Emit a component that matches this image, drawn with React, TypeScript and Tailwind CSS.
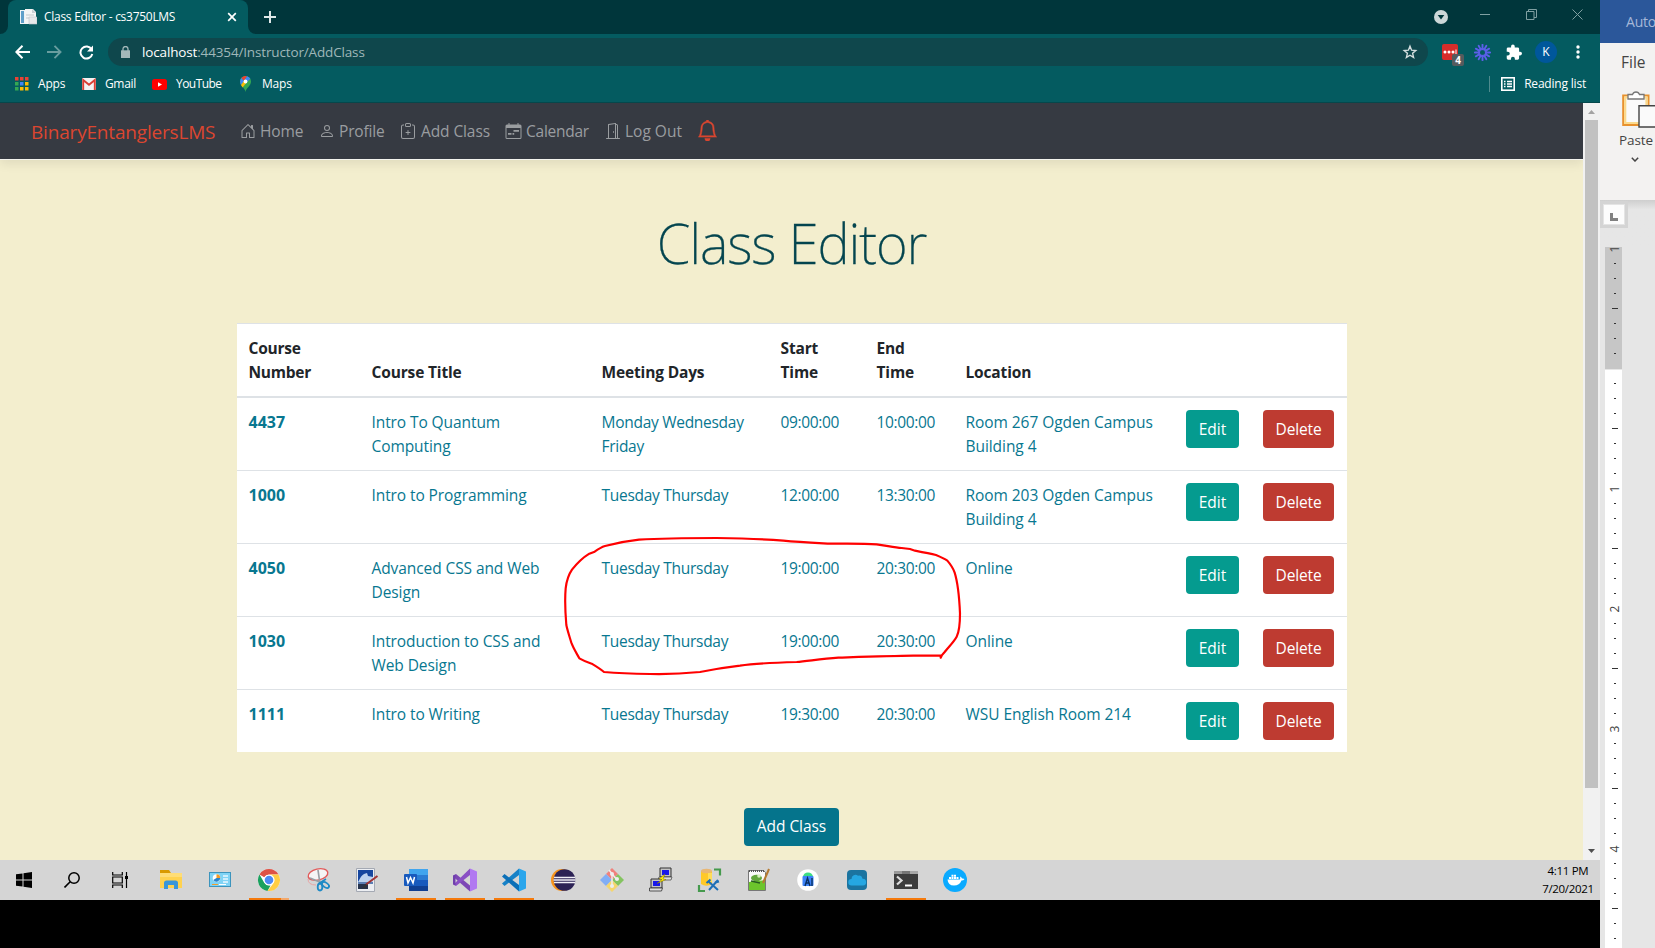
import type { ReactNode } from "react";
import { BsBell, BsClipboardPlus, BsDoorOpen, BsHouseDoor, BsPerson } from "react-icons/bs";

/* ---------- Browser chrome ---------- */

function DocIcon() {
  return (
    <svg width="17" height="16" viewBox="0 0 17 16" className="shrink-0">
      <path d="M0 1h9l2 2v12H0z" fill="#eef3f6" />
      <path d="M1 2h3v12H1z" fill="#5f9fc9" />
      <path d="M5 0h8l3 3v12H5z" fill="#f4f5f5" />
      <path d="M12 0l4 4h-4z" fill="#c9ced2" />
      <path d="M6 6h8M6 9h5" stroke="#c3c9cc" />
      <path d="M9 8h8v7H9z" fill="#e6e8ea" stroke="#bfc5c9" strokeWidth=".6" />
    </svg>
  );
}

function TabStrip() {
  return (
    <div className="flex h-[34px] items-stretch bg-[#00363b]">
      <div className="flex w-2 items-end">
        <svg width="8" height="8"><path d="M8 0v8H0a8 8 0 0 0 8-8z" fill="#045b60" /></svg>
      </div>
      <div className="flex w-[240px] items-center rounded-t-lg bg-[#045b60] pl-3 pr-[11px]">
        <DocIcon />
        <span className="ml-[7px] whitespace-nowrap text-[12px] tracking-[-0.280px] text-white">Class Editor - cs3750LMS</span>
        <svg width="10" height="10" viewBox="0 0 10 10" className="ml-auto shrink-0"><path d="M1.2 1.2l7.6 7.6M8.8 1.2L1.2 8.8" stroke="#fff" strokeWidth="1.7" /></svg>
      </div>
      <div className="flex w-2 items-end">
        <svg width="8" height="8"><path d="M0 0v8h8a8 8 0 0 1-8-8z" fill="#045b60" /></svg>
      </div>
      <div className="flex items-center pl-2">
        <svg width="12" height="12"><path d="M6 0v12M0 6h12" stroke="#dfe8e8" strokeWidth="2" /></svg>
      </div>
      <div className="ml-auto flex items-start">
        <svg width="14" height="14" viewBox="0 0 14 14" className="mt-[10px]">
          <circle cx="7" cy="7" r="7" fill="#ccd7d8" /><path d="M3.7 5h6.6L7 9.6z" fill="#00363b" />
        </svg>
        <svg width="10" height="10" className="ml-8 mt-[10px]"><path d="M0 4.500h10" stroke="#80a0a2" /></svg>
        <svg width="11" height="11" className="ml-9 mt-[9px]"><path d="M.5 2.500h7.500v8H.5zM2.500 2.500v-2h8v8h-2.500" fill="none" stroke="#80a0a2" /></svg>
        <svg width="11" height="11" className="ml-[35px] mr-[17px] mt-[9px]"><path d="M.5.5l10 10M10.500.5l-10 10" stroke="#80a0a2" /></svg>
      </div>
    </div>
  );
}

function Starburst() {
  const spokes = Array.from({ length: 12 }, (_, i) => i * 30);
  return (
    <svg width="17" height="17" viewBox="-8.500 -8.500 17 17">
      {spokes.map((a) => (
        <path key={a} d="M0-3.300V-7.700" stroke="#5b5fe8" strokeWidth="1.900" strokeLinecap="round" transform={`rotate(${a})`} />
      ))}
      <circle r="3.700" fill="none" stroke="#5b5fe8" strokeWidth="1.600" />
    </svg>
  );
}

function AddressBar() {
  return (
    <div className="flex h-9 items-center">
      <svg width="15" height="14" viewBox="0 0 15 14" className="ml-[15px]"><path d="M7.500.8L1.400 7l6.100 6.200M1.500 7H15" fill="none" stroke="#fff" strokeWidth="2" /></svg>
      <svg width="15" height="14" viewBox="0 0 15 14" className="ml-[17px]"><path d="M7.500.8L13.600 7l-6.100 6.200M13.500 7H0" fill="none" stroke="#699d9f" strokeWidth="1.800" /></svg>
      <svg width="15" height="15" viewBox="0 0 15 15" className="ml-[17px]"><path d="M12.600 4.400A6 6 0 1 0 13.300 9" fill="none" stroke="#fff" strokeWidth="2" /><path d="M14 .5v6H8z" fill="#fff" /></svg>
      <div className="ml-[14px] flex h-7 w-[1320px] items-center rounded-full bg-[#0f474c] pl-[13px] pr-[10px]">
        <svg width="9" height="12" viewBox="0 0 9 12"><path d="M0 4.300h9V12H0z" fill="#a4b8ba" /><path d="M2 5V3a2.500 2.500 0 0 1 5 0v2" fill="none" stroke="#a4b8ba" strokeWidth="1.300" /></svg>
        <span className="ml-[12px] whitespace-nowrap text-[13.500px] tracking-[-0.150px] text-[#9fb7b9]">
          <span className="text-white">localhost</span>:44354/Instructor/AddClass
        </span>
        <svg width="16" height="16" viewBox="0 0 16 16" className="ml-auto"><path d="M8 2.200l1.600 4 4.200.3-3.200 2.800 1 4.100L8 11.200l-3.600 2.200 1-4.100L2.200 6.500l4.200-.3z" fill="none" stroke="#d5dfdf" strokeWidth="1.400" /></svg>
      </div>
      <div className="relative ml-[14px] h-4 w-4 rounded-[2px] bg-[#d62d2a]">
        <svg width="16" height="16"><g fill="#fff"><circle cx="3" cy="8" r="1.500" /><circle cx="7" cy="8" r="1.500" /><circle cx="11" cy="8" r="1.500" /><path d="M13.500 5.500h1v5h-1z" /></g></svg>
        <span className="absolute left-[10px] top-[10px] flex h-3 w-3 items-center justify-center rounded-[2px] bg-[#555b5e] text-[10px] font-bold leading-none text-white">4</span>
      </div>
      <div className="ml-4"><Starburst /></div>
      <svg width="16" height="17" viewBox="1 1 22 22" className="ml-[15px]"><path d="M20.500 11H19V7a2 2 0 0 0-2-2h-4V3.500a2.500 2.500 0 0 0-5 0V5H4a2 2 0 0 0-2 2v3.800h1.500a2.700 2.700 0 0 1 0 5.400H2V20a2 2 0 0 0 2 2h3.800v-1.500a2.700 2.700 0 0 1 5.400 0V22H17a2 2 0 0 0 2-2v-4h1.500a2.500 2.500 0 0 0 0-5z" fill="#fff" /></svg>
      <span className="ml-[13px] flex h-[22px] w-[22px] items-center justify-center rounded-full bg-[#00579b] text-[12px] text-white">K</span>
      <svg width="4" height="14" viewBox="0 0 4 14" className="ml-[19px]" fill="#fff"><circle cx="2" cy="2" r="1.700" /><circle cx="2" cy="7" r="1.700" /><circle cx="2" cy="12" r="1.700" /></svg>
    </div>
  );
}

function BookmarksBar() {
  const dots = ["#ea4335", "#ea4335", "#ea4335", "#34a853", "#4285f4", "#fbbc05", "#34a853", "#fbbc05", "#fbbc05"];
  return (
    <div className="flex h-[28px] items-center whitespace-nowrap text-[12px] tracking-[-0.200px] text-white">
      <svg width="14" height="14" className="ml-[15px]">
        {dots.map((c, i) => <rect key={i} x={(i % 3) * 5} y={Math.floor(i / 3) * 5} width="3.500" height="3.500" fill={c} />)}
      </svg>
      <span className="ml-[9px] w-[27px]">Apps</span>
      <svg width="14" height="12" viewBox="0 0 14 12" className="ml-[17px]"><rect width="14" height="12" rx="1" fill="#f3f3f3" /><path d="M1.200 12V2L7 6.800 12.800 2v10" fill="none" stroke="#d93f35" strokeWidth="1.900" /></svg>
      <span className="ml-[9px] w-[32px] tracking-[-0.350px]">Gmail</span>
      <svg width="15" height="11" className="ml-[15px]"><rect width="15" height="11" rx="2.500" fill="#f00" /><path d="M6 3.200l4 2.300-4 2.300z" fill="#fff" /></svg>
      <span className="ml-[9px] w-[48px] tracking-[-0.550px]">YouTube</span>
      <svg width="11" height="16" viewBox="0 0 11 16" className="ml-[16px]">
        <path d="M5.500 16C5 12 0 10 0 5.500a5.500 5.500 0 0 1 11 0C11 10 6 12 5.500 16z" fill="#34a853" />
        <path d="M1.300 2A5.500 5.500 0 0 1 7 .2L4 5z" fill="#ea4335" /><path d="M7 .2a5.500 5.500 0 0 1 3.300 2.600L7 6 4 5z" fill="#4285f4" />
        <path d="M1.300 2L4 5l-3 4C-.3 6.500-.2 4 1.300 2z" fill="#4285f4" /><path d="M1 9l3-4 3 1-4.500 5.500z" fill="#fbbc05" /><circle cx="5.500" cy="5.500" r="1.900" fill="#fff" />
      </svg>
      <span className="ml-[11px]">Maps</span>
      <span className="ml-auto h-4 w-px bg-[#4f8b8e]" />
      <svg width="14" height="14" viewBox="0 0 14 14" className="ml-[11px]"><rect x=".8" y=".8" width="12.400" height="12.400" fill="none" stroke="#fff" strokeWidth="1.600" /><path d="M3 4.500h1.500M6 4.500h5M3 7h1.500M6 7h5M3 9.500h1.500M6 9.500h5" stroke="#fff" strokeWidth="1.300" /></svg>
      <span className="ml-[9px] mr-[14px]">Reading list</span>
    </div>
  );
}

/* ---------- Page ---------- */

function CalendarIcon() {
  return (
    <svg width="17" height="16" viewBox="0 0 17 16" fill="currentColor">
      <path d="M3.500 0h1v1.500h8V0h1v1.500H15A1.500 1.500 0 0 1 16.500 3v11.500A1.500 1.500 0 0 1 15 16H2a1.500 1.500 0 0 1-1.500-1.500V3A1.500 1.500 0 0 1 2 1.500h1.500zM1.500 5v9.500a.5.5 0 0 0 .5.5h13a.5.5 0 0 0 .5-.5V5z" fillRule="evenodd" />
      <path d="M8.500 7H14v1.700H8.500zM3 10h3.500v1.700H3zM7.500 10h1.700v1.700H7.500z" />
    </svg>
  );
}

function NavLink({ icon, label, className }: { icon: ReactNode; label: string; className: string }) {
  return (
    <a className={`flex items-center whitespace-nowrap text-[15.500px] text-[#9a9da0] ${className}`}>
      {icon}
      <span className="pt-[2px]">{label}</span>
    </a>
  );
}

function Navbar() {
  return (
    <nav className="relative z-10 flex h-14 items-center bg-[#363a42] shadow-[0_1px_0_#f4f4ee,0_5px_10px_rgba(0,0,0,0.08)]">
      <a className="ml-[31px] w-[185px] whitespace-nowrap pt-[2px] text-[19px] tracking-[-0.180px] text-[#dc4630]">BinaryEntanglersLMS</a>
      <NavLink className="ml-6 w-[79px] gap-1 tracking-[-0.100px]" icon={<BsHouseDoor size={16} />} label="Home" />
      <NavLink className="w-[81px] gap-1 tracking-[-0.150px]" icon={<BsPerson size={16} />} label="Profile" />
      <NavLink className="w-[105px] gap-[5px] tracking-[-0.100px]" icon={<BsClipboardPlus size={16} />} label="Add Class" />
      <NavLink className="w-[100px] gap-1 tracking-[-0.250px]" icon={<CalendarIcon />} label="Calendar" />
      <NavLink className="w-[92px] gap-1" icon={<BsDoorOpen size={16} />} label="Log Out" />
      <BsBell className="-mt-px text-[#dc4630]" size={21} stroke="currentColor" strokeWidth={0.4} />
    </nav>
  );
}

const columns = "grid grid-cols-[123px_230px_179px_96px_89px_220px_77px_96px]";

const courses = [
  ["4437", "Intro To Quantum\nComputing", "Monday Wednesday\nFriday", "09:00:00", "10:00:00", "Room 267 Ogden Campus\nBuilding 4"],
  ["1000", "Intro to Programming", "Tuesday Thursday", "12:00:00", "13:30:00", "Room 203 Ogden Campus\nBuilding 4"],
  ["4050", "Advanced CSS and Web\nDesign", "Tuesday Thursday", "19:00:00", "20:30:00", "Online"],
  ["1030", "Introduction to CSS and\nWeb Design", "Tuesday Thursday", "19:00:00", "20:30:00", "Online"],
  ["1111", "Intro to Writing", "Tuesday Thursday", "19:30:00", "20:30:00", "WSU English Room 214"],
];

function CourseTable() {
  return (
    <div className="mx-auto mt-[43px] w-[1110px] whitespace-pre border-t border-[#dee2e6] bg-white text-[15.500px] leading-6">
      <div className={`${columns} h-[74px] items-end border-b-2 border-[#dee2e6] pb-3 font-bold tracking-[-0.150px] text-[#212529]`}>
        <span className="pl-3 tracking-[-0.250px]">{"Course\nNumber"}</span>
        <span className="pl-3">Course Title</span>
        <span className="pl-3">Meeting Days</span>
        <span className="pl-3">{"Start\nTime"}</span>
        <span className="pl-3">{"End\nTime"}</span>
        <span className="pl-3">Location</span>
      </div>
      {courses.map(([id, title, days, start, end, place], i) => (
        <div key={id} className={`${columns} py-3 text-[#087790] ${i > 0 ? "border-t border-[#dee2e6]" : ""} ${i < 4 ? "min-h-[72px]" : ""}`}>
          <span className="pl-3 text-[16px] font-bold">{id}</span>
          <span className="pl-3 tracking-[-0.090px]">{title}</span>
          <span className="pl-3 tracking-[-0.280px]">{days}</span>
          <span className="pl-3 tracking-[-0.340px]">{start}</span>
          <span className="pl-3 tracking-[-0.340px]">{end}</span>
          <span className="pl-3 tracking-[-0.060px]">{place}</span>
          <span className="pl-3"><button className="h-[38px] w-[53px] rounded-[4px] bg-[#059b8f] pl-px text-white">Edit</button></span>
          <span className="pl-3"><button className="h-[38px] w-[71px] rounded-[4px] bg-[#be3b31] pl-px tracking-[-0.150px] text-white">Delete</button></span>
        </div>
      ))}
    </div>
  );
}

function HandDrawnCircle() {
  return (
    <svg width="440" height="180" viewBox="0 0 1320 540" className="pointer-events-none absolute left-[540px] top-[510px] z-20">
      <path
        d="M1202 443L1205 437L1120 437C1050 438 960 441 895 443C840 447 800 454 770 456C700 458 640 461 600 467C550 473 520 478 480 486C420 492 370 493 330 492C280 491 230 489 192 486C180 476 170 470 155 461C140 456 130 452 118 445C110 430 100 415 94 398C88 378 82 360 79 345C76 310 74 270 77 235C80 210 87 192 96 179C115 155 130 142 148 131L164 125C175 117 185 111 195 108C225 100 260 93 297 89C360 85 450 84 530 84C600 85 680 88 730 92C770 96 810 98 850 100C900 102 960 100 1010 103C1040 107 1065 113 1085 114L1110 117L1125 122C1150 127 1170 131 1188 135C1200 140 1212 145 1222 152C1234 166 1240 176 1244 188C1254 220 1258 265 1260 310C1260 340 1258 365 1250 380C1240 398 1226 410 1214 426L1202 440"
        fill="none" stroke="#f00" strokeWidth="6.500" strokeLinejoin="round" strokeLinecap="round"
      />
    </svg>
  );
}

function Scrollbar() {
  return (
    <div className="flex w-[17px] flex-col items-center bg-[#f1f1f1]">
      <svg width="17" height="17"><path d="M5 11h7L8.500 7z" fill="#a3a3a3" /></svg>
      <div className="h-[668px] w-[13px] bg-[#c1c1c1]" />
      <svg width="17" height="17" className="mt-auto"><path d="M5 6h7L8.500 10z" fill="#505050" /></svg>
    </div>
  );
}

/* ---------- Taskbar ---------- */

const taskIcons: { art: ReactNode; bar?: "full" | "split" }[] = [
  { art: <><path d="M5 5h9l2 3H5z" fill="#d99a00" /><path d="M5 8h22v15H5z" fill="#ffd24f" /><path d="M5 8h22v4H5z" fill="#ffdd76" /><path d="M9 24v-6q0-2.500 2.500-2.500h9q2.500 0 2.500 2.500v6h-4v-4h-6v4z" fill="#3a96d9" /></> },
  { art: <><rect x="5.500" y="7.500" width="21" height="14" fill="#7fd3f5" stroke="#3c94bd" /><circle cx="12.500" cy="13" r="3.800" fill="#fff" /><path d="M12.500 13V9.200a3.800 3.800 0 0 1 3.800 3.800z" fill="#f49b27" /><path d="M12.500 13h3.800a3.800 3.800 0 0 1-7 2z" fill="#2b83c9" /><path d="M19 11h5M19 14h5M19 17h5" stroke="#e9f8ff" strokeWidth="1.700" /><path d="M8 19.500h6" stroke="#f49b27" /><path d="M15 19.500h7" stroke="#fff" /></> },
  { bar: "split", art: <><circle cx="16" cy="15" r="11" fill="#fff" /><path d="M16 4a11 11 0 0 1 9.530 5.500H16a5.500 5.500 0 0 0-4.760 2.750L6.470 9.500A11 11 0 0 1 16 4z" fill="#de5246" /><path d="M6.470 9.500l4.770 8.250A5.500 5.500 0 0 0 16 20.500l1.500 0L14.500 26A11 11 0 0 1 6.470 9.500z" fill="#1aa15f" /><path d="M25.530 9.500A11 11 0 0 1 14.500 25.900l6.260-8.150A5.500 5.500 0 0 0 16 9.500z" fill="#ffce44" /><circle cx="16" cy="15" r="5.300" fill="#fff" /><circle cx="16" cy="15" r="4.300" fill="#4c8bf5" /></> },
  { art: <><ellipse cx="16" cy="9.500" rx="10" ry="5.500" fill="#f5f5f5" stroke="#e25b5b" strokeWidth="1.400" transform="rotate(-13 16 9.500)" /><path d="M6 14q0 6 8 6" fill="none" stroke="#e8a5a5" /><path d="M16 5l2 14M8 13l12 5" stroke="#9aa0a5" strokeWidth="1.700" /><ellipse cx="18" cy="22" rx="2.300" ry="3.500" fill="none" stroke="#1e8ac6" strokeWidth="1.800" /><ellipse cx="23.500" cy="20" rx="2.300" ry="4" fill="none" stroke="#1e8ac6" strokeWidth="1.800" transform="rotate(-55 23.500 20)" /><path d="M17 18.500l7-4.500" stroke="#1e8ac6" strokeWidth="1.500" /></> },
  { art: <><path d="M5.500 3.500h18v23h-18z" fill="#eceef2" stroke="#a4a9b3" /><path d="M7 5h15v12H7z" fill="#16469f" /><path d="M7 17c2-3 2-5 6-8l3-1 1 3 5 1v5z" fill="#bcd2ef" /><path d="M7 17h15v2H7z" fill="#5b7fb5" /><path d="M7 19h10v5H7z" fill="#26334d" /><path d="M26.500 11L15 19.500" stroke="#a23434" strokeWidth="2" /><path d="M15.500 18.500l-5 5 5-1.500z" fill="#333" /></> },
  { bar: "full", art: <><path d="M9 4h19v6H9z" fill="#41a5ee" /><path d="M9 10h19v5H9z" fill="#2b7cd3" /><path d="M9 15h19v6H9z" fill="#185abd" /><path d="M9 21h19v5H9z" fill="#103f91" /><rect x="4" y="9" width="13" height="12" rx="1" fill="#185abd" /><path d="M6.500 12l1.500 6 2.500-5.500L13 18l1.500-6" fill="none" stroke="#fff" strokeWidth="1.500" /></> },
  { bar: "full", art: <><path d="M21 3.500l7 3v17l-7 3z" fill="#b179f1" /><path d="M4.500 10.500L7 9l14 11.500v6L4.500 12z" fill="#7d47b5" /><path d="M21 3.500V10L7 21l-2.500-1.500z" fill="#8a4fc4" /><path d="M4 10.500l2.500-1v11l-2.500-1z" fill="#7040ad" /></> },
  { bar: "full", art: <><path d="M21 3.500l-17 15 2.500 2.500L21 10z" fill="#1681c7" /><path d="M21 26.500l-17-15L6.500 9 21 20z" fill="#0b70b8" /><path d="M21 3.500l7 3v17l-7 3z" fill="#2ba6ec" /></> },
  { art: <><circle cx="15" cy="15" r="11" fill="#f7941e" /><circle cx="17.500" cy="15" r="10.800" fill="#2c2255" /><path d="M7 12.500h21M6.500 15h22M7 17.500h21" stroke="#f0eff6" strokeWidth="1.400" /></> },
  { art: <><path d="M16 3l6 6-6 6-6-6z" fill="#f0817c" /><path d="M10 9l6 6-6 6-6-6z" fill="#82aef5" /><path d="M22 9l6 6-6 6-6-6z" fill="#84c460" /><path d="M16 15l6 6-6 6-6-6z" fill="#f5d66d" /><path d="M13 5l8 10M16 9v13" stroke="#eee" strokeWidth="1.500" /><g fill="#eee"><circle cx="16" cy="9" r="2" /><circle cx="16" cy="21" r="2" /><circle cx="21" cy="14" r="2" /></g></> },
  { art: <><path d="M15 3h11v9H15z" fill="#c4c4c4" stroke="#333" /><path d="M17 5h7v5h-7z" fill="#1717ea" /><path d="M14 12h13l-1 3H13z" fill="#ddd" stroke="#444" strokeWidth=".7" /><path d="M6 14h11v9H6z" fill="#c4c4c4" stroke="#333" /><path d="M8 16h7v5H8z" fill="#1717ea" /><path d="M4.500 23h13l-1 3h-12z" fill="#ddd" stroke="#333" strokeWidth=".8" /><path d="M20 9l-6 5 3 .5-5 4 9-4-3-.5z" fill="#ffef00" stroke="#806f00" strokeWidth=".5" /></> },
  { art: <><path d="M7 6v13q5 3.500 11 0V6z" fill="#ffc928" /><ellipse cx="12.500" cy="6" rx="5.500" ry="2.300" fill="#e9b774" /><path d="M14 8h4v9h-4z" fill="#ffdd58" /><path d="M20 4.500h6v6M5 20v6h6" fill="none" stroke="#459a4d" strokeWidth="2.200" /><path d="M14 16l10 9M24 15l-9 10" stroke="#1d70b7" strokeWidth="2" /><path d="M21 17.500l4-1M12.500 18l4-3.500" stroke="#1d70b7" strokeWidth="2" /></> },
  { art: <><path d="M5.500 5.500h15l2 2v18h-17z" fill="#fafafa" stroke="#777" /><path d="M6 6h15" stroke="#555" strokeWidth="2" strokeDasharray="1 1" /><path d="M6 17l16-2v10H6z" fill="#6cc52c" /><ellipse cx="13.500" cy="13" rx="5.500" ry="3.200" fill="#62a73c" /><circle cx="16" cy="11" r="1.800" fill="#d6f0bd" /><path d="M8 16l9 2" stroke="#285f1f" strokeWidth="1.500" /><path d="M26 4l-6 14" stroke="#b67a31" strokeWidth="2" /></> },
  { art: <><circle cx="16" cy="15" r="10.800" fill="#fff" /><path d="M11 12a5 4.500 0 0 1 10 0z" fill="#3ddc84" /><rect x="10.500" y="11" width="11" height="10" rx="1" fill="#3c82f7" /><path d="M13 21l2.500-8 2.500 8M14 18h3.500M20 13v8" fill="none" stroke="#082f62" strokeWidth="1.400" /></> },
  { art: <><rect x="6" y="5" width="20" height="20" rx="4" fill="#1b74a0" /><path d="M10.500 20.500a3.200 3.200 0 0 1 0-6.400 4 4 0 0 1 6.500-3.300q3.500-1 4.500 3a3.200 3.200 0 0 1 .5 6.700z" fill="#25a7e2" /></> },
  { bar: "full", art: <><path d="M4 6h24v18H4z" fill="#3d3d3d" /><path d="M4 6h8v3H4z" fill="#999" /><path d="M12 6h8v3h-8z" fill="#777" /><path d="M20 6h8v3h-8z" fill="#a8a8a8" /><path d="M7 11.500l4.500 4-4.500 4" fill="none" stroke="#ddd" strokeWidth="2.200" /><path d="M15 20.500h7" stroke="#fff" strokeWidth="2" /></> },
  { art: <><circle cx="16" cy="15" r="12" fill="#0aaaff" /><path d="M8.500 14.500H21q.5-1.500 0-3 1.500.5 2 2 1.500-.3 2.500.4-1 1.600-3 1.600Q20.500 20.500 15 20.500q-6 0-6.500-6zM10 12h2v2h-2zM12.500 12h2v2h-2zM15 12h2v2h-2zM17.500 12h2v2h-2zM12.500 9.700h2v2h-2zM15 9.700h2v2h-2z" fill="#fff" /></> },
];

function Taskbar() {
  return (
    <div className="flex h-10 bg-[#d5d5d5]">
      <div className="flex w-12 items-center justify-center"><svg width="16" height="16"><path d="M0 2.300L6.500 1.400v6.100H0zM7.500 1.200L16 0v7.500H7.500zM0 8.500h6.500v6.100L0 13.700zM7.500 8.500H16V16l-8.500-1.200z" fill="#000" /></svg></div>
      <div className="flex w-12 items-center justify-center"><svg width="16" height="16"><circle cx="10" cy="6" r="5.200" fill="none" stroke="#000" strokeWidth="1.500" /><path d="M6.200 9.800L.5 15.500" stroke="#000" strokeWidth="1.600" /></svg></div>
      <div className="flex w-[50px] items-center pl-4"><svg width="16" height="16"><path d="M.7 0v3h9.600V0M.7 16v-3h9.600v3M.7 5h9.600v6H.7z" fill="none" stroke="#000" strokeWidth="1.200" /><path d="M14.500 0v16" stroke="#000" strokeWidth="1.200" /><path d="M13 4h3v3h-3z" /></svg></div>
      {taskIcons.map((t, i) => (
        <div key={i} className="flex w-[49px] flex-col items-start justify-between pl-[5px] pt-[5px]">
          <svg width="32" height="30" className="ml-1">{t.art}</svg>
          <div className="flex h-[2px] w-10">
            {t.bar === "full" && <div className="w-10 bg-[#f57a0c]" />}
            {t.bar === "split" && <><div className="w-8 bg-[#f57a0c]" /><div className="w-2 bg-[#f3a86b]" /></>}
          </div>
        </div>
      ))}
      <div className="ml-auto w-[64px] pt-[2px] text-center text-[11.500px] leading-[18px] tracking-[-0.320px] text-black">
        <div>4:11 PM</div>
        <div>7/20/2021</div>
      </div>
    </div>
  );
}

/* ---------- Word window ---------- */

function RulerMark({ step }: { step: number }) {
  if (step === 8) return null;
  if (step % 8 === 0) {
    const n = step === 0 ? 1 : (step - 8) / 8;
    return <span className="-rotate-90 text-[12px] leading-none text-[#444]">{n}</span>;
  }
  return step % 4 === 0 ? <span className="h-px w-[6px] bg-[#333]" /> : <span className="h-px w-[2px] bg-[#333]" />;
}

function WordWindow() {
  const steps = Array.from({ length: 47 }, (_, i) => i);
  return (
    <aside className="flex w-[55px] flex-col overflow-hidden bg-[#e6e6e6]">
      <div className="flex h-[43px] items-center bg-[#2b579a] pl-[26px] text-[14px] tracking-[-0.200px] text-[#a5b8d8]">Auto</div>
      <div className="flex h-[157px] shrink-0 flex-col bg-[#f3f2f1] text-[#444]">
        <div className="mt-[7px] pl-[21px] text-[15.500px] leading-6">File</div>
        <svg width="33" height="40" viewBox="0 0 33 40" className="ml-[22px] mt-[15px]">
          <path d="M1.200 6.500h25.300V36H1.200z" fill="#fafafa" stroke="#e8912d" strokeWidth="2" />
          <path d="M3.200 8.500h21.300V34H3.200z" fill="none" stroke="#fbd98b" strokeWidth="2.200" />
          <path d="M6 10V5.500h4.500a3.700 3.700 0 0 1 7 0H22V10z" fill="#fff" stroke="#777" strokeWidth="1.300" />
          <path d="M17 16.700h18V38H17z" fill="#fafafa" stroke="#444" strokeWidth="1.400" />
        </svg>
        <div className="mt-px pl-[19px] text-[13.500px] leading-5 tracking-[-0.100px]">Paste</div>
        <svg width="8" height="5" className="ml-[31px] mt-[7px]"><path d="M.8.800L4 4 7.200.8" fill="none" stroke="#444" strokeWidth="1.500" /></svg>
      </div>
      <div className="h-[47px] shrink-0 bg-linear-to-b from-[#cecece] via-[#e6e6e6] via-20% to-[#e6e6e6] pt-px">
        <div className="flex h-[27px] w-7 items-center bg-[#d4d4d4] pl-[3px]">
          <div className="flex h-[21px] w-[22px] items-center justify-center border border-[#e4e4e4] bg-[#fcfcfc]"><svg width="8" height="8" className="mt-[4px]"><path d="M1.500 0v6.500H8" fill="none" stroke="#808080" strokeWidth="3" /></svg></div>
        </div>
      </div>
      <div className="ml-[5px] flex w-[17px] flex-1 flex-col bg-[linear-gradient(#c6c6c6_0,#c6c6c6_122px,#e6e6e6_122px,#e6e6e6_123px,#fff_123px)]">
        <div className="-mt-[6px] flex flex-col">
          {steps.map((s) => (
            <div key={s} className="flex h-[15px] items-center justify-center pl-[3px]"><RulerMark step={s} /></div>
          ))}
        </div>
      </div>
    </aside>
  );
}

export default function App() {
  return (
    <div className="flex h-[948px] w-[1655px] overflow-hidden bg-black font-['Open_Sans','Noto_Sans',sans-serif]">
      <div className="relative flex w-[1600px] flex-col">
        <TabStrip />
        <div className="h-[69px] border-b border-[#05474b] bg-[#045b60]">
          <AddressBar />
          <BookmarksBar />
        </div>
        <div className="flex h-[757px]">
          <main className="w-[1583px] overflow-hidden bg-[#f3eece]">
            <Navbar />
            <h1 className="mt-[47px] text-center font-['Noto_Sans',sans-serif] text-[54.500px] font-extralight leading-[74px] tracking-[-1.100px] text-[#04454f] [-webkit-text-stroke:0.3px_#04454f]">Class Editor</h1>
            <CourseTable />
            <div className="mt-14 flex justify-center">
              <button className="h-[38px] w-[95px] rounded-[4px] bg-[#05748c] text-[15.500px] tracking-[-0.050px] text-white">Add Class</button>
            </div>
          </main>
          <Scrollbar />
        </div>
        <Taskbar />
        <HandDrawnCircle />
      </div>
      <WordWindow />
    </div>
  );
}
